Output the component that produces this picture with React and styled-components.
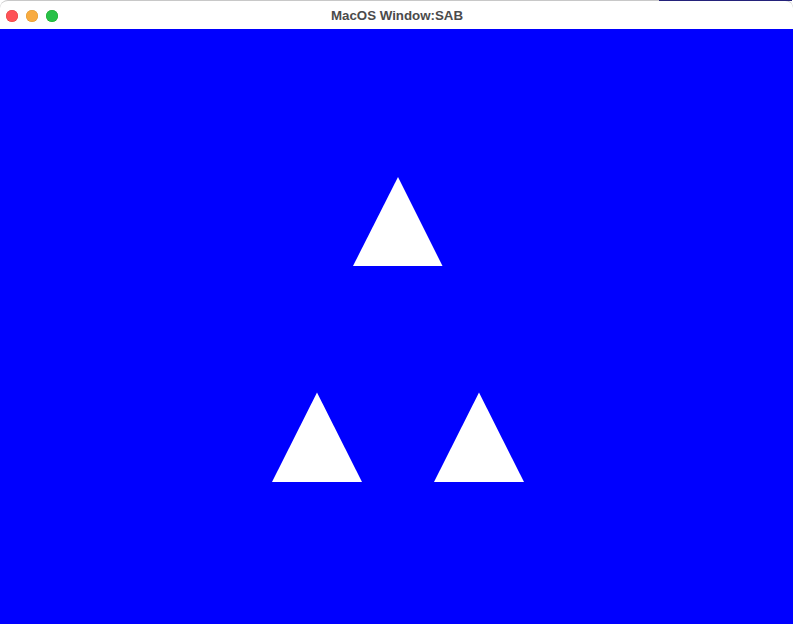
import React from 'react';
import styled, { createGlobalStyle } from 'styled-components';

const GlobalStyle = createGlobalStyle`
  html, body {
    margin: 0;
    padding: 0;
    background: #ffffff;
  }
  body {
    font-family: "Liberation Sans", Arial, sans-serif;
  }
`;

const Window = styled.div`
  width: 793px;
  height: 624px;
  display: flex;
  flex-direction: column;
  overflow: hidden;
`;

const TitleBar = styled.div`
  position: relative;
  height: 29px;
  flex: none;
  display: flex;
  align-items: center;
  background: #ffffff;
  border-top: 1px solid #c8c8c8;
  border-radius: 8px 8px 0 0;
  box-sizing: border-box;
`;

// the dark strip along the top edge on the right
const EdgeStrip = styled.div`
  position: absolute;
  top: -1px;
  left: 659px;
  right: 1px;
  height: 1px;
  background: #24227a;
`;

const Lights = styled.div`
  display: flex;
  gap: 8px;
  padding-left: 6px;
  margin-top: 1px;
`;

const Light = styled.span`
  width: 12px;
  height: 12px;
  border-radius: 50%;
  background: ${p => p.color};
  box-shadow: inset 0 0 0 0.5px ${p => p.rim};
`;

const Title = styled.div`
  position: absolute;
  left: 0;
  right: 0;
  top: 0;
  bottom: 0;
  display: flex;
  align-items: center;
  justify-content: center;
  font-size: 13.3px;
  font-weight: bold;
  color: #4b4b4b;
  padding-left: 1px;
  pointer-events: none;
`;

const Canvas = styled.div`
  flex: 1;
  background: #0000ff;
`;

const Drawing = styled.svg`
  display: block;
  width: 793px;
  height: 595px;
`;

const triangles = [
  '398,148 353,237 442.5,237',
  '317,363.5 272,453 362,453',
  '479,363.5 434,453 524,453',
];

export default function App() {
  return (
    <>
      <GlobalStyle />
      <Window>
        <TitleBar>
          <EdgeStrip />
          <Lights>
            <Light color="#fe5257" rim="#e0443e" />
            <Light color="#f8ab40" rim="#de9a2e" />
            <Light color="#28c048" rim="#1aab29" />
          </Lights>
          <Title>MacOS Window:SAB</Title>
        </TitleBar>
        <Canvas>
          <Drawing viewBox="0 0 793 595">
            {triangles.map(pts => (
              <polygon key={pts} points={pts} fill="#ffffff" />
            ))}
          </Drawing>
        </Canvas>
      </Window>
    </>
  );
}
